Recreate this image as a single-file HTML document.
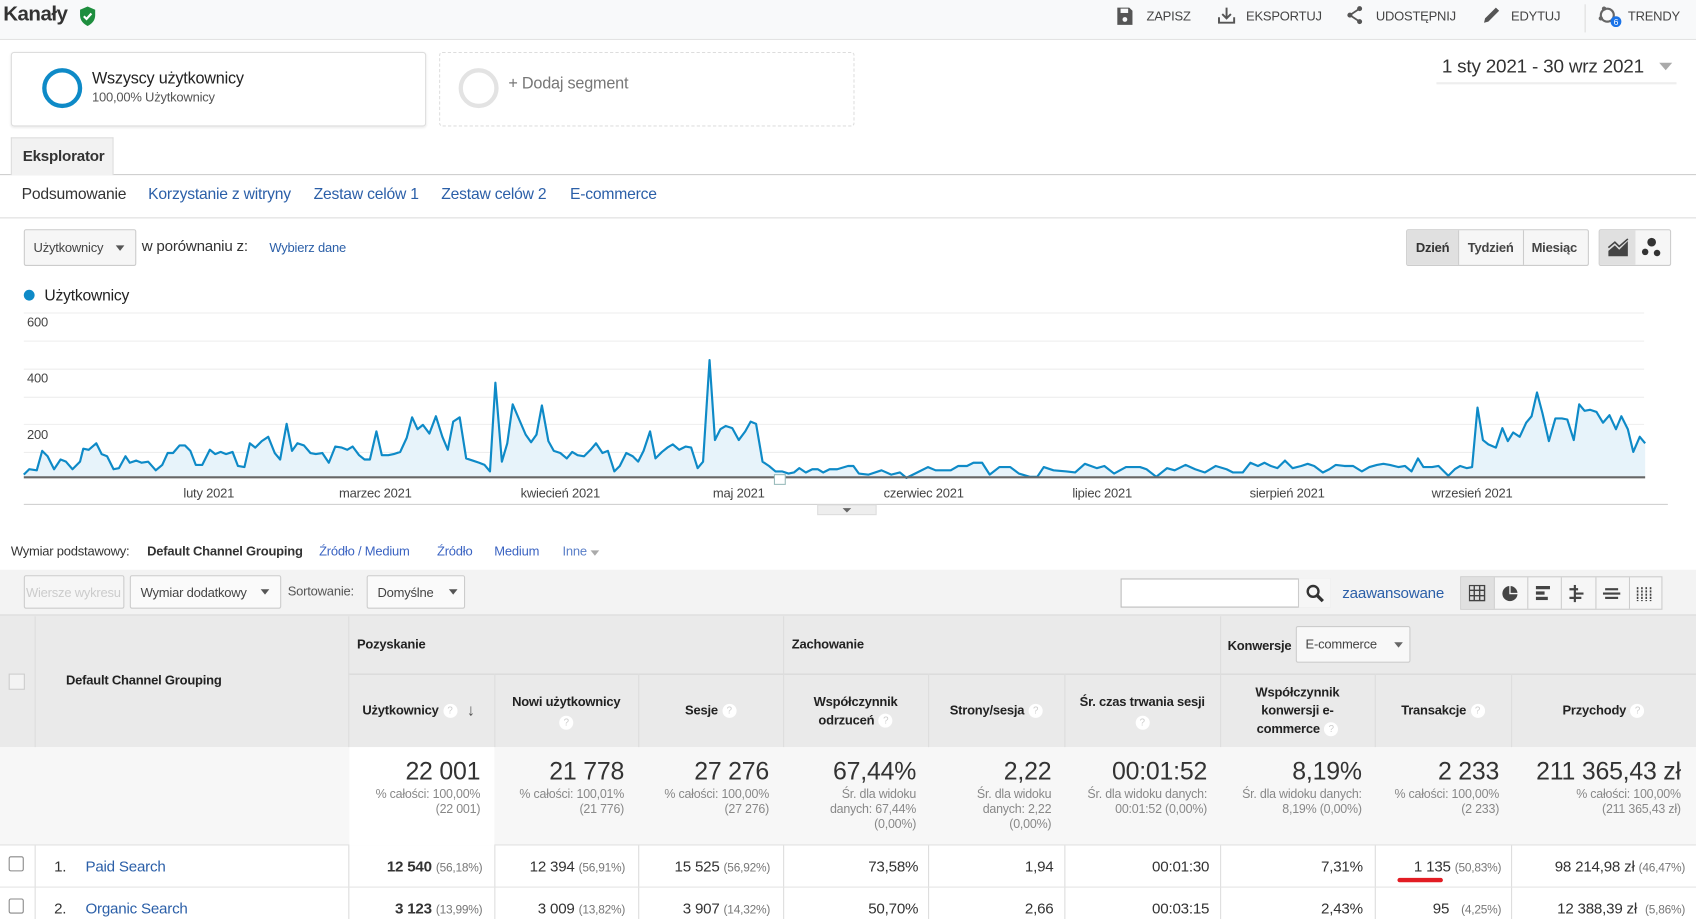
<!DOCTYPE html>
<html><head><meta charset="utf-8">
<style>
*{box-sizing:border-box;margin:0;padding:0}
html,body{width:1696px;height:919px;overflow:hidden;background:#fff}
#w{position:absolute;left:0;top:0;width:1568px;height:850px;transform:scale(1.08163,1.08118);transform-origin:0 0;font-family:"Liberation Sans",sans-serif;color:#333;letter-spacing:-0.2px}
.a{position:absolute;white-space:nowrap}
.lk{color:#2b5fa8}
.btn{position:absolute;border:1px solid #ccc;border-radius:2px;background:#f6f6f6;font-size:12px;color:#444;display:flex;align-items:center}
.tri{display:inline-block;width:0;height:0;border-left:4px solid transparent;border-right:4px solid transparent;border-top:5px solid #555}
.hd{position:absolute;font-size:12px;font-weight:bold;color:#222;text-align:center;display:flex;align-items:center;justify-content:center;line-height:17px}
.q{display:inline-block;width:13px;height:13px;border-radius:50%;background:#fff;color:#ccc;font-size:9px;line-height:13px;text-align:center;font-weight:normal;vertical-align:middle;margin-left:4px}
.vl{position:absolute;top:623px;height:227px;width:1px;background:#ddd}
.big{position:absolute;font-size:23px;color:#333;text-align:right}
.sm{position:absolute;font-size:11.5px;color:#888;text-align:right;line-height:14px}
.rv{position:absolute;font-size:14px;color:#333;text-align:right}
.pc{font-size:11px;color:#777}
</style></head><body><div id="w">
<!-- top bar -->
<div class="a" style="left:0;top:0;width:1568px;height:37px;background:#f8f9fa;border-bottom:1px solid #e3e3e3"></div>
<div class="a" style="left:3px;top:3px;font-size:19px;font-weight:bold;color:#333;letter-spacing:-0.5px">Kanały</div>
<svg class="a" style="left:72px;top:5px" width="18" height="20" viewBox="0 0 18 20"><path d="M9 1 L16 4 V9 C16 14 13 17 9 19 C5 17 2 14 2 9 V4 Z" fill="#1e8e3e"/><path d="M5.5 10 L8 12.5 L12.5 7.5" stroke="#fff" stroke-width="2" fill="none"/></svg>
<svg class="a" style="left:1032px;top:6px" width="16" height="18" viewBox="0 0 16 18"><path d="M1 1 H12 L15 4 V17 H1 Z" fill="#555"/><rect x="4" y="2" width="7" height="4" fill="#f8f9fa"/><circle cx="8" cy="12" r="2.2" fill="#f8f9fa"/></svg>
<div class="a" style="left:1060px;top:8px;font-size:12px;color:#444">ZAPISZ</div>
<svg class="a" style="left:1125px;top:5px" width="18" height="18" viewBox="0 0 18 18"><path d="M9 2 V12 M5 8 L9 12 L13 8 M2 11 V16 H16 V11" stroke="#555" stroke-width="1.8" fill="none"/></svg>
<div class="a" style="left:1152px;top:8px;font-size:12px;color:#444">EKSPORTUJ</div>
<svg class="a" style="left:1244px;top:5px" width="18" height="18" viewBox="0 0 18 18"><circle cx="13" cy="3" r="2.3" fill="#555"/><circle cx="4" cy="9" r="2.3" fill="#555"/><circle cx="13" cy="15" r="2.3" fill="#555"/><path d="M13 3 L4 9 L13 15" stroke="#555" stroke-width="1.6" fill="none"/></svg>
<div class="a" style="left:1272px;top:8px;font-size:12px;color:#444">UDOSTĘPNIJ</div>
<svg class="a" style="left:1370px;top:5px" width="18" height="18" viewBox="0 0 18 18"><path d="M2 16 L3 12 L13 2 L16 5 L6 15 Z" fill="#555"/></svg>
<div class="a" style="left:1397px;top:8px;font-size:12px;color:#444">EDYTUJ</div>
<div class="a" style="left:1465px;top:4px;width:1px;height:26px;background:#ddd"></div>
<svg class="a" style="left:1476px;top:3px" width="26" height="26" viewBox="0 0 26 26"><circle cx="10" cy="11" r="6" stroke="#666" stroke-width="2" fill="none"/><circle cx="7" cy="5" r="2" fill="#666"/><circle cx="4" cy="14" r="2" fill="#666"/><circle cx="18" cy="17" r="5" fill="#1a73e8"/><text x="18" y="20" font-size="8" fill="#fff" text-anchor="middle" font-family="Liberation Sans">6</text></svg>
<div class="a" style="left:1505px;top:8px;font-size:12px;color:#444">TRENDY</div>

<!-- segments -->
<div class="a" style="left:10px;top:48px;width:384px;height:69px;border:1px solid #ddd;border-radius:3px;box-shadow:0 1px 2px rgba(0,0,0,.08)"></div>
<div class="a" style="left:39px;top:63px;width:37px;height:37px;border:4px solid #0e8ac7;border-radius:50%"></div>
<div class="a" style="left:85px;top:64px;font-size:15px;color:#222">Wszyscy użytkownicy</div>
<div class="a" style="left:85px;top:83px;font-size:12px;color:#555">100,00% Użytkownicy</div>
<div class="a" style="left:406px;top:48px;width:384px;height:69px;border:1px dashed #ddd;border-radius:3px"></div>
<div class="a" style="left:424px;top:63px;width:37px;height:37px;border:4px solid #e3e3e3;border-radius:50%"></div>
<div class="a" style="left:470px;top:69px;font-size:15px;color:#777">+ Dodaj segment</div>
<div class="a" style="left:1333px;top:51px;font-size:17.5px;color:#333">1 sty 2021 - 30 wrz 2021</div>
<div class="a" style="left:1534px;top:58px;border-left:6px solid transparent;border-right:6px solid transparent;border-top:7px solid #aaa"></div>
<div class="a" style="left:1328px;top:76px;width:222px;height:2px;background:#eee"></div>

<!-- tabs -->
<div class="a" style="left:0;top:161px;width:1568px;height:1px;background:#ccc"></div>
<div class="a" style="left:10px;top:127px;width:95px;height:35px;background:#f2f2f2;border:1px solid #ddd;border-bottom:none"></div>
<div class="a" style="left:21px;top:136px;font-size:14px;font-weight:bold;color:#333">Eksplorator</div>
<div class="a" style="left:20px;top:172px;font-size:14.5px;color:#333">Podsumowanie</div>
<div class="a lk" style="left:137px;top:172px;font-size:14.5px">Korzystanie z witryny</div>
<div class="a lk" style="left:290px;top:172px;font-size:14.5px">Zestaw celów 1</div>
<div class="a lk" style="left:408px;top:172px;font-size:14.5px">Zestaw celów 2</div>
<div class="a lk" style="left:527px;top:172px;font-size:14.5px">E-commerce</div>
<div class="a" style="left:0;top:201px;width:1568px;height:1px;background:#ddd"></div>

<!-- controls -->
<div class="btn" style="left:22px;top:212px;width:104px;height:34px;padding-left:8px">Użytkownicy<span class="tri" style="margin-left:12px"></span></div>
<div class="a" style="left:131px;top:219px;font-size:14px;color:#333">w porównaniu z:</div>
<div class="a lk" style="left:249px;top:222px;font-size:12px">Wybierz dane</div>
<div class="a" style="left:1300px;top:212px;width:169px;height:34px;border:1px solid #ccc;border-radius:2px;background:#f6f6f6"></div>
<div class="a" style="left:1301px;top:213px;width:47px;height:32px;background:#e0e0e0"></div>
<div class="a" style="left:1348px;top:213px;width:1px;height:32px;background:#ccc"></div>
<div class="a" style="left:1408px;top:213px;width:1px;height:32px;background:#ccc"></div>
<div class="a" style="left:1309px;top:222px;font-size:12px;font-weight:bold;color:#333">Dzień</div>
<div class="a" style="left:1357px;top:222px;font-size:12px;font-weight:bold;color:#444">Tydzień</div>
<div class="a" style="left:1416px;top:222px;font-size:12px;font-weight:bold;color:#444">Miesiąc</div>
<div class="a" style="left:1478px;top:212px;width:67px;height:34px;border:1px solid #ccc;border-radius:2px;background:#f6f6f6"></div>
<div class="a" style="left:1479px;top:213px;width:33px;height:32px;background:#e0e0e0"></div>
<svg class="a" style="left:1486px;top:220px" width="20" height="18" viewBox="0 0 20 18"><path d="M1 17 V12 L7 7 L11 11 L19 3 V17 Z" fill="#444"/><path d="M1 9 L7 4 L11 8 L19 1" stroke="#444" stroke-width="1.5" fill="none"/></svg>
<svg class="a" style="left:1517px;top:219px" width="20" height="20" viewBox="0 0 20 20"><circle cx="10" cy="5" r="4" fill="#333"/><circle cx="4" cy="14" r="3" fill="#333"/><circle cx="15" cy="15" r="3" fill="#333"/></svg>

<!-- chart -->
<div class="a" style="left:22px;top:268px;width:10px;height:10px;border-radius:50%;background:#0e8ac7"></div>
<div class="a" style="left:41px;top:266px;font-size:14.5px;color:#222">Użytkownicy</div>
<svg class="a" style="left:0;top:285px" width="1568" height="200" viewBox="0 285 1568 200">
<g stroke="#eee" stroke-width="1"><line x1="22" y1="289.5" x2="1520" y2="289.5"/><line x1="22" y1="315.5" x2="1520" y2="315.5"/><line x1="22" y1="341.5" x2="1520" y2="341.5"/><line x1="22" y1="367.5" x2="1520" y2="367.5"/><line x1="22" y1="392.5" x2="1520" y2="392.5"/><line x1="22" y1="418.5" x2="1520" y2="418.5"/></g>
<g font-family="Liberation Sans" font-size="12" fill="#444"><text x="25" y="302">600</text><text x="25" y="354">400</text><text x="25" y="406">200</text></g>
<polygon fill="#e7f3fa" points="22,441 22,439 27,434 34,435 39,417 44,422 50,434 56,425 61,427 67,434 74,427 77,415 82,416 89,410 94,420 99,422 105,434 110,433 116,422 120,428 126,426 131,428 137,427 144,435 150,430 155,419 160,419 166,412 171,412 176,417 181,430 187,430 194,416 199,420 204,418 209,420 215,418 220,431 226,432 231,410 236,414 242,408 248,404 254,419 259,425 265,392 270,417 275,410 281,412 287,419 292,420 298,419 304,428 310,413 316,414 321,416 326,413 332,421 337,425 342,425 348,399 353,421 359,421 364,420 370,418 376,405 381,386 386,397 391,393 397,401 403,385 409,404 414,416 419,390 425,386 431,424 437,426 443,428 448,430 453,436 458,354 464,427 469,410 474,374 480,388 486,402 491,409 496,402 501,375 507,408 512,417 518,419 524,424 529,418 534,421 540,422 546,416 551,410 557,419 562,417 568,436 573,431 579,419 585,422 590,427 595,417 601,399 606,424 612,418 617,414 622,411 628,416 634,413 639,414 645,433 650,427 656,333 661,407 666,397 671,394 677,396 683,407 689,399 694,390 699,392 705,427 711,431 717,436 723,436 729,438 734,437 739,433 745,437 751,434 756,434 761,437 767,434 774,434 784,431 789,431 794,438 803,439 815,435 824,439 832,437 838,442 848,437 858,432 865,435 879,435 886,431 894,431 900,428 908,428 915,439 924,432 934,432 942,438 952,441 959,441 965,432 974,435 986,436 994,437 1003,429 1014,433 1021,431 1030,438 1041,432 1054,432 1060,434 1069,441 1079,433 1086,435 1096,430 1105,434 1114,437 1124,431 1134,434 1140,437 1149,437 1156,428 1163,431 1169,428 1175,431 1181,433 1188,426 1195,433 1203,431 1209,429 1215,431 1223,437 1229,434 1235,430 1243,431 1251,431 1259,436 1266,432 1273,430 1279,429 1285,430 1293,432 1299,431 1305,436 1311,424 1316,432 1324,432 1330,431 1339,440 1345,434 1350,431 1356,433 1361,432 1366,377 1371,407 1376,411 1383,414 1389,396 1394,408 1399,400 1405,404 1411,391 1416,385 1421,363 1426,382 1432,408 1438,387 1444,387 1449,388 1455,407 1460,374 1465,380 1470,379 1476,381 1482,391 1488,384 1494,397 1499,385 1505,397 1510,418 1516,404 1521,410 1521,441"/>
<polyline fill="none" stroke="#0e8ac7" stroke-width="2" stroke-linejoin="round" points="22,439 27,434 34,435 39,417 44,422 50,434 56,425 61,427 67,434 74,427 77,415 82,416 89,410 94,420 99,422 105,434 110,433 116,422 120,428 126,426 131,428 137,427 144,435 150,430 155,419 160,419 166,412 171,412 176,417 181,430 187,430 194,416 199,420 204,418 209,420 215,418 220,431 226,432 231,410 236,414 242,408 248,404 254,419 259,425 265,392 270,417 275,410 281,412 287,419 292,420 298,419 304,428 310,413 316,414 321,416 326,413 332,421 337,425 342,425 348,399 353,421 359,421 364,420 370,418 376,405 381,386 386,397 391,393 397,401 403,385 409,404 414,416 419,390 425,386 431,424 437,426 443,428 448,430 453,436 458,354 464,427 469,410 474,374 480,388 486,402 491,409 496,402 501,375 507,408 512,417 518,419 524,424 529,418 534,421 540,422 546,416 551,410 557,419 562,417 568,436 573,431 579,419 585,422 590,427 595,417 601,399 606,424 612,418 617,414 622,411 628,416 634,413 639,414 645,433 650,427 656,333 661,407 666,397 671,394 677,396 683,407 689,399 694,390 699,392 705,427 711,431 717,436 723,436 729,438 734,437 739,433 745,437 751,434 756,434 761,437 767,434 774,434 784,431 789,431 794,438 803,439 815,435 824,439 832,437 838,442 848,437 858,432 865,435 879,435 886,431 894,431 900,428 908,428 915,439 924,432 934,432 942,438 952,441 959,441 965,432 974,435 986,436 994,437 1003,429 1014,433 1021,431 1030,438 1041,432 1054,432 1060,434 1069,441 1079,433 1086,435 1096,430 1105,434 1114,437 1124,431 1134,434 1140,437 1149,437 1156,428 1163,431 1169,428 1175,431 1181,433 1188,426 1195,433 1203,431 1209,429 1215,431 1223,437 1229,434 1235,430 1243,431 1251,431 1259,436 1266,432 1273,430 1279,429 1285,430 1293,432 1299,431 1305,436 1311,424 1316,432 1324,432 1330,431 1339,440 1345,434 1350,431 1356,433 1361,432 1366,377 1371,407 1376,411 1383,414 1389,396 1394,408 1399,400 1405,404 1411,391 1416,385 1421,363 1426,382 1432,408 1438,387 1444,387 1449,388 1455,407 1460,374 1465,380 1470,379 1476,381 1482,391 1488,384 1494,397 1499,385 1505,397 1510,418 1516,404 1521,410"/>
<line x1="22" y1="441.5" x2="1521" y2="441.5" stroke="#666" stroke-width="2"/>
<rect x="716" y="439" width="10" height="9" fill="#fff" stroke="#9bb" stroke-width="1"/>
<g font-family="Liberation Sans" font-size="12" fill="#444" text-anchor="middle"><text x="193" y="460">luty 2021</text><text x="347" y="460">marzec 2021</text><text x="518" y="460">kwiecień 2021</text><text x="683" y="460">maj 2021</text><text x="854" y="460">czerwiec 2021</text><text x="1019" y="460">lipiec 2021</text><text x="1190" y="460">sierpień 2021</text><text x="1361" y="460">wrzesień 2021</text></g>
<line x1="22" y1="466.5" x2="1542" y2="466.5" stroke="#ccc"/>
<rect x="756" y="467" width="54" height="9" fill="#eee" stroke="#ddd"/>
<path d="M779 470 L787 470 L783 474 Z" fill="#666"/>
</svg>

<!-- primary dimension -->
<div class="a" style="left:10px;top:503px;font-size:12px;color:#333">Wymiar podstawowy:</div>
<div class="a" style="left:136px;top:503px;font-size:12px;font-weight:bold;color:#333">Default Channel Grouping</div>
<div class="a lk" style="left:295px;top:503px;font-size:12px;color:#3a63c2">Źródło / Medium</div>
<div class="a lk" style="left:404px;top:503px;font-size:12px;color:#3a63c2">Źródło</div>
<div class="a lk" style="left:457px;top:503px;font-size:12px;color:#3a63c2">Medium</div>
<div class="a lk" style="left:520px;top:503px;font-size:12px;color:#5a7fc8">Inne <span class="tri" style="border-top-color:#aaa"></span></div>

<!-- toolbar -->
<div class="a" style="left:0;top:527px;width:1568px;height:43px;background:#f3f3f3;border-bottom:2px solid #e2e2e2"></div>
<div class="btn" style="left:22px;top:532px;width:93px;height:31px;color:#ccc;padding-left:1px">Wiersze wykresu</div>
<div class="btn" style="left:120px;top:532px;width:140px;height:31px;padding-left:9px;background:#fafafa">Wymiar dodatkowy<span class="tri" style="margin-left:13px"></span></div>
<div class="a" style="left:266px;top:540px;font-size:12px;color:#555">Sortowanie:</div>
<div class="btn" style="left:339px;top:532px;width:91px;height:31px;padding-left:9px;background:#fafafa">Domyślne<span class="tri" style="margin-left:14px"></span></div>
<div class="a" style="left:1036px;top:535px;width:194px;height:27px;border:1px solid #bbb;background:#fff"></div>
<div class="a" style="left:1200px;top:535px;width:30px;height:27px;border-left:1px solid #ccc;background:#f6f6f6"></div>
<svg class="a" style="left:1207px;top:540px" width="18" height="18" viewBox="0 0 18 18"><circle cx="7" cy="7" r="5" stroke="#333" stroke-width="2.2" fill="none"/><path d="M10.5 10.5 L16 16" stroke="#333" stroke-width="3"/></svg>
<div class="a lk" style="left:1241px;top:540px;font-size:14px;color:#2b5fa8">zaawansowane</div>
<div class="a" style="left:1350px;top:533px;width:187px;height:31px;border:1px solid #ccc;background:#f6f6f6"></div>
<div class="a" style="left:1351px;top:534px;width:30px;height:29px;background:#e0e0e0"></div>
<div class="a" style="left:1381px;top:534px;width:1px;height:29px;background:#ccc"></div>
<div class="a" style="left:1412px;top:534px;width:1px;height:29px;background:#ccc"></div>
<div class="a" style="left:1443px;top:534px;width:1px;height:29px;background:#ccc"></div>
<div class="a" style="left:1475px;top:534px;width:1px;height:29px;background:#ccc"></div>
<div class="a" style="left:1506px;top:534px;width:1px;height:29px;background:#ccc"></div>
<svg class="a" style="left:1358px;top:541px" width="170" height="16" viewBox="0 0 170 16">
<g stroke="#444" fill="none" stroke-width="1.3"><rect x="0.5" y="0.5" width="14" height="14"/><path d="M5 0.5 V14.5 M10 0.5 V14.5 M0.5 5 H14.5 M0.5 10 H14.5"/></g>
<circle cx="38" cy="8" r="7" fill="#444"/><path d="M38 1 V8 H45" stroke="#f6f6f6" stroke-width="1.2" fill="none"/>
<g fill="#444"><rect x="62" y="1" width="13" height="3"/><rect x="62" y="6" width="8" height="3"/><rect x="62" y="11" width="11" height="3"/></g>
<path d="M98 0 V16 M93 4 H101 M98 8 H106 M93 12 H104" stroke="#444" stroke-width="2" fill="none"/>
<g fill="#444"><rect x="126" y="3" width="12" height="2"/><rect x="124" y="7" width="16" height="2"/><rect x="126" y="11" width="12" height="2"/></g>
<g stroke="#444" stroke-width="1.5" stroke-dasharray="2 1"><path d="M156 2 V15 M160 2 V15 M164 2 V15 M168 2 V15"/></g>
</svg>

<!-- table header -->
<div class="a" style="left:0;top:570px;width:1568px;height:121px;background:#eaeaea"></div>
<div class="a" style="left:322px;top:623px;width:1246px;height:1px;background:#d6d6d6"></div>
<div class="a" style="left:32px;top:570px;width:1px;height:280px;background:#ddd"></div>
<div class="a" style="left:322px;top:570px;width:1px;height:280px;background:#ddd"></div>
<div class="a" style="left:724px;top:570px;width:1px;height:280px;background:#ddd"></div>
<div class="a" style="left:1128px;top:570px;width:1px;height:280px;background:#ddd"></div>
<div class="vl" style="left:457px"></div><div class="vl" style="left:590px"></div><div class="vl" style="left:858px"></div><div class="vl" style="left:984px"></div><div class="vl" style="left:1271px"></div><div class="vl" style="left:1397px"></div>
<div class="a" style="left:8px;top:623px;width:15px;height:15px;border:1px solid #ccc;background:#f3f3f3"></div>
<div class="a" style="left:61px;top:622px;font-size:12px;font-weight:bold;color:#222">Default Channel Grouping</div>
<div class="a" style="left:330px;top:589px;font-size:12px;font-weight:bold;color:#222">Pozyskanie</div>
<div class="a" style="left:732px;top:589px;font-size:12px;font-weight:bold;color:#222">Zachowanie</div>
<div class="a" style="left:1135px;top:590px;font-size:12px;font-weight:bold;color:#222">Konwersje</div>
<div class="btn" style="left:1198px;top:579px;width:106px;height:34px;padding-left:8px;background:#f8f8f8">E-commerce<span class="tri" style="margin-left:16px;border-top-color:#666"></span></div>
<div class="hd" style="left:322px;top:624px;width:135px;height:67px;justify-content:flex-start;padding-left:13px">Użytkownicy<span class="q">?</span><span style="margin-left:9px;font-size:15px;color:#555">↓</span></div>
<div class="hd" style="left:457px;top:624px;width:133px;height:67px;flex-direction:column">Nowi użytkownicy<span class="q" style="margin:4px 0 0">?</span></div>
<div class="hd" style="left:590px;top:624px;width:134px;height:67px">Sesje<span class="q">?</span></div>
<div class="hd" style="left:724px;top:624px;width:134px;height:67px"><div>Współczynnik<br>odrzuceń<span class="q">?</span></div></div>
<div class="hd" style="left:858px;top:624px;width:126px;height:67px">Strony/sesja<span class="q">?</span></div>
<div class="hd" style="left:984px;top:624px;width:144px;height:67px;flex-direction:column">Śr. czas trwania sesji<span class="q" style="margin:4px 0 0">?</span></div>
<div class="hd" style="left:1128px;top:624px;width:143px;height:67px"><div>Współczynnik<br>konwersji e-<br>commerce<span class="q">?</span></div></div>
<div class="hd" style="left:1271px;top:624px;width:126px;height:67px">Transakcje<span class="q">?</span></div>
<div class="hd" style="left:1397px;top:624px;width:171px;height:67px">Przychody<span class="q">?</span></div>

<!-- totals -->
<div class="a" style="left:0;top:691px;width:1568px;height:91px;background:#f7f7f7;border-bottom:1px solid #e2e2e2"></div>
<div class="a" style="left:323px;top:691px;width:134px;height:91px;background:#fff"></div>
<div class="big" style="right:1124px;top:700px">22 001</div><div class="sm" style="right:1124px;top:728px">% całości: 100,00%<br>(22 001)</div>
<div class="big" style="right:991px;top:700px">21 778</div><div class="sm" style="right:991px;top:728px">% całości: 100,01%<br>(21 776)</div>
<div class="big" style="right:857px;top:700px">27 276</div><div class="sm" style="right:857px;top:728px">% całości: 100,00%<br>(27 276)</div>
<div class="big" style="right:721px;top:700px">67,44%</div><div class="sm" style="right:721px;top:728px">Śr. dla widoku<br>danych: 67,44%<br>(0,00%)</div>
<div class="big" style="right:596px;top:700px">2,22</div><div class="sm" style="right:596px;top:728px">Śr. dla widoku<br>danych: 2,22<br>(0,00%)</div>
<div class="big" style="right:452px;top:700px">00:01:52</div><div class="sm" style="right:452px;top:728px">Śr. dla widoku danych:<br>00:01:52 (0,00%)</div>
<div class="big" style="right:309px;top:700px">8,19%</div><div class="sm" style="right:309px;top:728px">Śr. dla widoku danych:<br>8,19% (0,00%)</div>
<div class="big" style="right:182px;top:700px">2 233</div><div class="sm" style="right:182px;top:728px">% całości: 100,00%<br>(2 233)</div>
<div class="big" style="right:14px;top:700px">211 365,43 zł</div><div class="sm" style="right:14px;top:728px">% całości: 100,00%<br>(211 365,43 zł)</div>

<!-- rows -->
<div class="a" style="left:0;top:820px;width:1568px;height:1px;background:#e4e4e4"></div>
<div class="a" style="left:8px;top:792px;width:14px;height:14px;border:1px solid #888;border-radius:2px"></div>
<div class="a" style="left:8px;top:831px;width:14px;height:14px;border:1px solid #888;border-radius:2px"></div>
<div class="a" style="left:50px;top:793px;font-size:14px">1.</div>
<div class="a lk" style="left:79px;top:793px;font-size:14px">Paid Search</div>
<div class="a" style="left:50px;top:832px;font-size:14px">2.</div>
<div class="a lk" style="left:79px;top:832px;font-size:14px">Organic Search</div>
<div class="rv" style="right:1122px;top:793px"><b>12 540</b> <span class="pc">(56,18%)</span></div>
<div class="rv" style="right:990px;top:793px">12 394 <span class="pc">(56,91%)</span></div>
<div class="rv" style="right:856px;top:793px">15 525 <span class="pc">(56,92%)</span></div>
<div class="rv" style="right:719px;top:793px">73,58%</div>
<div class="rv" style="right:594px;top:793px">1,94</div>
<div class="rv" style="right:450px;top:793px">00:01:30</div>
<div class="rv" style="right:308px;top:793px">7,31%</div>
<div class="rv" style="right:180px;top:793px">1 135 <span class="pc">(50,83%)</span></div>
<div class="a" style="left:1292px;top:812px;width:42px;height:4px;background:#e21c23;border-radius:2px"></div>
<div class="rv" style="right:10px;top:793px">98 214,98 zł <span class="pc">(46,47%)</span></div>
<div class="rv" style="right:1122px;top:832px"><b>3 123</b> <span class="pc">(13,99%)</span></div>
<div class="rv" style="right:990px;top:832px">3 009 <span class="pc">(13,82%)</span></div>
<div class="rv" style="right:856px;top:832px">3 907 <span class="pc">(14,32%)</span></div>
<div class="rv" style="right:719px;top:832px">50,70%</div>
<div class="rv" style="right:594px;top:832px">2,66</div>
<div class="rv" style="right:450px;top:832px">00:03:15</div>
<div class="rv" style="right:308px;top:832px">2,43%</div>
<div class="rv" style="right:180px;top:832px">95 &nbsp;&nbsp;<span class="pc">(4,25%)</span></div>
<div class="rv" style="right:10px;top:832px">12 388,39 zł &nbsp;<span class="pc">(5,86%)</span></div>
</div></body></html>
